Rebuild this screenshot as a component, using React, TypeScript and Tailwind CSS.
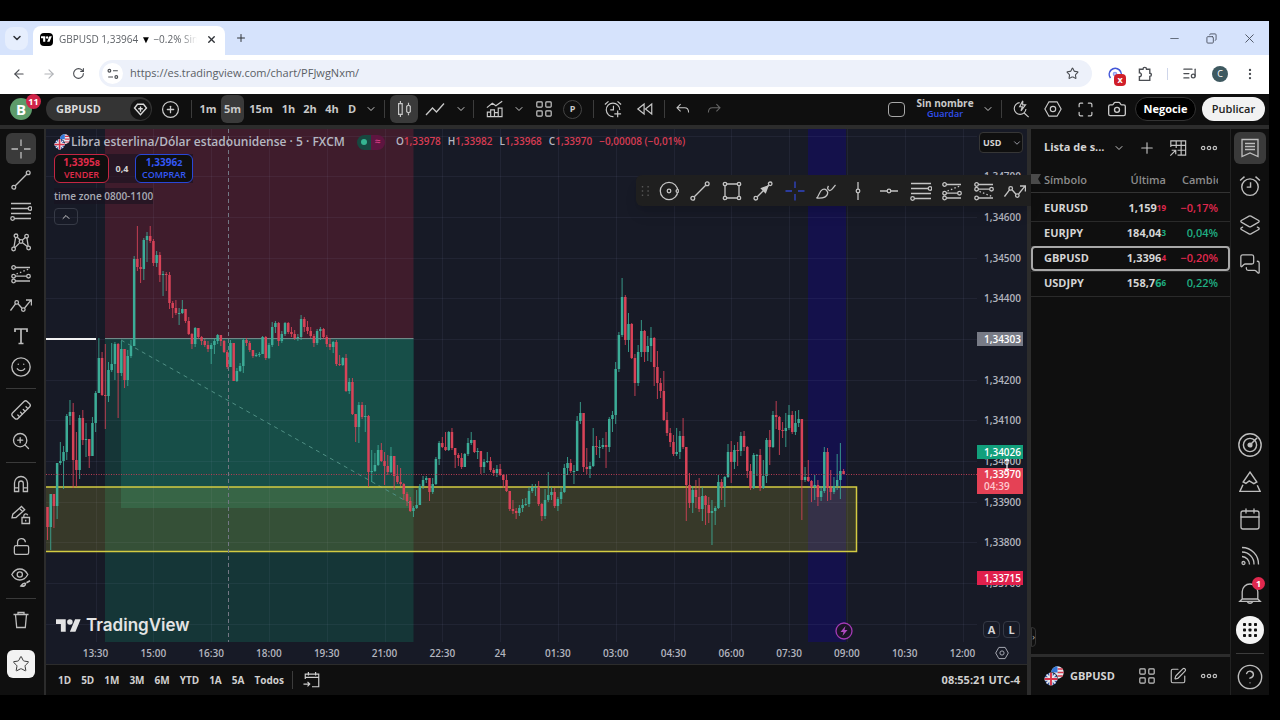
import type { ReactNode } from "react";
import {
  ArrowLeft,
  ArrowRight,
  Calendar,
  Camera,
  ChevronDown,
  ChevronUp,
  CircleHelp,
  CirclePlus,
  Copy,
  EllipsisVertical,
  Layers2,
  ListMusic,
  LockOpen,
  Maximize,
  MessagesSquare,
  Minus,
  Plus,
  RotateCw,
  Ruler,
  Smile,
  SquarePen,
  Star,
  X,
  ZoomIn,
} from "lucide-react";

/* ---------- icons ---------- */

function Icon({ children, className = "w-5 h-5" }: { children: ReactNode; className?: string }) {
  return (
    <svg viewBox="0 0 20 20" className={className} fill="none" stroke="currentColor" strokeWidth="1.3" aria-hidden="true">
      {children}
    </svg>
  );
}

const CrossIcon = () => (
  <Icon>
    <path d="M10 0.5v6.5M10 13v6.5M0.5 10h6.5M13 10h6.5" />
  </Icon>
);

const TrendIcon = () => (
  <Icon>
    <path d="M4.3 15.7 15.7 4.3" />
    <circle cx="2.8" cy="17.2" r="1.9" />
    <circle cx="17.2" cy="2.8" r="1.9" />
  </Icon>
);

const FibIcon = () => (
  <Icon className="w-[22px] h-5">
    <path d="M0 2.500h20M0 7.500h17M0 12.500h20M3.500 17.500H20" />
    <circle cx="19" cy="7.500" r="1.800" />
    <circle cx="1.600" cy="17.500" r="1.800" />
  </Icon>
);

const PatternIcon = () => (
  <Icon>
    <path d="M4.6 5.6 3 15.2M6.3 5.2l3 3M11.4 8l3-2.6M15.9 5.9l1.3 8.4M8.4 11.1l-4.6 4.7M11.5 10.7l4.8 3.9" />
    <circle cx="5" cy="3.8" r="1.8" />
    <circle cx="15.6" cy="4.2" r="1.8" />
    <circle cx="10" cy="9.5" r="1.8" />
    <circle cx="2.6" cy="17" r="1.8" />
    <circle cx="17.6" cy="16" r="1.8" />
  </Icon>
);

const LongIcon = () => (
  <Icon>
    <path d="M4.4 3.5H19M4.4 12.2h11.4M4.4 17H19" />
    <path d="M5.5 10 19 4.5" strokeDasharray="1.5 2.2" />
    <circle cx="2.6" cy="3.5" r="1.8" />
    <circle cx="2.6" cy="12.2" r="1.8" />
    <circle cx="2.6" cy="17" r="1.8" />
    <circle cx="17.5" cy="12.2" r="1.8" />
  </Icon>
);

const ShortIcon = () => (
  <Icon>
    <path d="M4.4 3.5H19M4.4 8.2h11.4M4.4 17H19" />
    <path d="M5.5 10.5 18 15.5" strokeDasharray="1.5 2.2" />
    <circle cx="2.6" cy="3.5" r="1.8" />
    <circle cx="2.6" cy="8.2" r="1.8" />
    <circle cx="2.6" cy="17" r="1.8" />
    <circle cx="17.5" cy="8.2" r="1.8" />
  </Icon>
);

const ZigzagIcon = () => (
  <Icon className="w-[22px] h-5">
    <path d="M-0.5 15.5 4.5 8.8M7 8.8l4 4.5M13.6 13 20 5.2M15 5h5.4v5.4" />
    <circle cx="5.7" cy="7.4" r="1.8" />
    <circle cx="12.3" cy="14.6" r="1.8" />
  </Icon>
);

const TextIcon = () => (
  <Icon>
    <path d="M4 6V3h12v3M10 3v14.5M7.5 17.5h5" strokeWidth="1.7" />
  </Icon>
);

const MagnetIcon = () => (
  <Icon>
    <path d="M3.5 17.5V9a6.5 6.5 0 0 1 13 0v8.500h-4.200V9.300a2.300 2.300 0 0 0-4.600 0v8.200zM3.500 13.800h4.200M12.300 13.800h4.200" />
  </Icon>
);

const PencilLockIcon = () => (
  <Icon>
    <path d="M1 12.800 1.800 9.200 10.500 1.500l3.200 3.200L5 12.500zM8.500 3.400l3.200 3.300M11 12.500h7.500v6H11zM12.800 12.500v-1.700a2 2 0 0 1 3.900-.5M14.700 14.700v1.700" />
  </Icon>
);

const EyeBrushIcon = () => (
  <Icon>
    <path d="M.8 7.500C3 3.500 5.800 2 8.800 2s5.900 1.500 8 5.500c-2.100 4-5 5.500-8 5.500S3 11.500.8 7.500z" />
    <circle cx="8.800" cy="7.500" r="2.600" />
    <path d="M10 19c3 .5 4.500-.5 4.500-2.500-1.800-.8-3 .2-4.500 2.500zM15.500 15.800l3.500-2" strokeWidth="1.600" />
  </Icon>
);

const TrashIcon = () => (
  <Icon>
    <path d="M2.500 4.500h15M7 4.200V2.500h6v1.700M4.500 4.500l1.200 13h8.600l1.200-13" />
  </Icon>
);

const GridIcon = () => (
  <Icon className="w-[18px] h-[18px]">
    <rect x="2" y="2" width="6" height="6" rx="1" />
    <rect x="12" y="2" width="6" height="6" rx="1" />
    <rect x="2" y="12" width="6" height="6" rx="1" />
    <rect x="12" y="12" width="6" height="6" rx="1" />
  </Icon>
);

const AlarmIcon = ({ plus = false }: { plus?: boolean }) => (
  <Icon className={plus ? "w-[18px] h-[18px]" : "w-[22px] h-[22px]"}>
    <path d={plus ? "M17.500 11A7.500 7.500 0 1 0 10.500 18.400M11.500 15.500h7.500M15.200 11.800v7.500" : "M17.500 11a7.500 7.500 0 1 1-15 0 7.500 7.500 0 0 1 15 0z"} />
    <path d="M10.500 6.500V11H7M1 5l4-3.500M19 5l-4-3.500" />
  </Icon>
);

const IndicatorIcon = () => (
  <Icon className="w-[18px] h-[18px]">
    <path d="M1.500 18.500v-5h3.700v5zM5.200 18.500v-7.500h4.200v7.500M9.400 14h4.200v4.500M13.600 18.500V9h4.200v9.500zM1.500 18.500h16.300M1 8.500l6-4.800 4 2.800L18 1.500" />
  </Icon>
);

const HexIcon = ({ className = "w-[18px] h-[18px]" }: { className?: string }) => (
  <Icon className={className}>
    <path d="M5.500 2h9L19 10l-4.500 8h-9L1 10z" />
    <circle cx="10" cy="10" r="3" />
  </Icon>
);

const DotsIcon = () => (
  <Icon className="w-[18px] h-[18px]">
    <circle cx="3.500" cy="10" r="1.900" />
    <circle cx="10" cy="10" r="1.900" />
    <circle cx="16.500" cy="10" r="1.900" />
  </Icon>
);

function Flags({ className }: { className: string }) {
  return (
    <svg viewBox="0 0 20 20" className={className} aria-hidden="true">
      <circle cx="13.500" cy="6.500" r="6.200" fill="#e8e8f0" />
      <path d="M13.500 3h5.200M13.500 6.500h6.200M13.500 10h5.200" stroke="#d33a4c" strokeWidth="1.500" />
      <path d="M13.500.3a6.200 6.200 0 0 0-6.200 6.200h6.200z" fill="#3478d8" />
      <circle cx="7" cy="13" r="7" fill="#101010" />
      <circle cx="7" cy="13" r="6.300" fill="#3c5ba8" />
      <path d="M2.600 8.600l8.800 8.800M11.400 8.600l-8.800 8.800" stroke="#eee" strokeWidth="1.500" />
      <path d="M7 6.700v12.600M.7 13h12.600" stroke="#eee" strokeWidth="3.400" />
      <path d="M7 6.700v12.600M.7 13h12.600" stroke="#d8334a" strokeWidth="1.900" />
    </svg>
  );
}

/* ---------- browser chrome ---------- */

function BrowserBar() {
  return (
    <header className="font-['Open_Sans',sans-serif] text-[#2f3237]">
      <div className="flex h-[34px] items-center bg-[#d6e3fc] pl-[5px]">
        <button aria-label="Buscar pestañas" className="flex h-[23px] w-[23px] items-center justify-center rounded-lg bg-[#e6eefd]">
          <ChevronDown className="h-3 w-3" strokeWidth={3} />
        </button>
        <div className="ml-[5px] flex h-[29px] w-[192px] items-center self-end rounded-t-lg bg-white pl-[7px] pb-[3px]">
          <span className="flex h-[13px] w-[13px] items-center justify-center rounded-sm bg-black text-white">
            <svg viewBox="0 0 36 26" className="w-[11px]" fill="currentColor" aria-hidden="true">
              <path d="M14 22H7V11H0V4h14v18zM28 22h-8l7.500-18h8L28 22z" />
              <circle cx="20" cy="8" r="4" />
            </svg>
          </span>
          <span className="ml-1.5 w-[138px] overflow-hidden text-[10px] whitespace-nowrap text-[#5f6368] [mask-image:linear-gradient(to_right,black_88%,transparent)]">
            GBPUSD 1,33964 <span className="text-black">▼</span> −0.2% Sin nombre
          </span>
          <button aria-label="Cerrar pestaña" className="ml-1.5 flex h-4 w-4 items-center justify-center">
            <X className="h-[11px] w-[11px]" strokeWidth={3} />
          </button>
        </div>
        <button aria-label="Nueva pestaña" className="ml-2 flex h-4 w-4 items-center justify-center">
          <Plus className="h-3 w-3" />
        </button>
        <div className="ml-auto flex items-center gap-6 pr-3 text-[#4b5260]">
          <button aria-label="Minimizar"><Minus className="h-[13px] w-[13px]" strokeWidth={1.5} /></button>
          <button aria-label="Restaurar"><Copy className="h-[11px] w-[13px] -scale-x-100" strokeWidth={2} /></button>
          <button aria-label="Cerrar"><X className="h-[15px] w-[15px]" strokeWidth={1.5} /></button>
        </div>
      </div>
      <div className="flex h-[39px] items-center bg-white px-3 pb-0.5 text-[#4a4d52]">
        <div className="flex items-center gap-4">
          <button aria-label="Atrás"><ArrowLeft className="h-[14px] w-[14px]" /></button>
          <button aria-label="Adelante"><ArrowRight className="h-[14px] w-[14px] text-[#b2b4b8]" /></button>
          <button aria-label="Recargar"><RotateCw className="h-[13px] w-[13px]" /></button>
        </div>
        <div className="ml-[14px] flex h-[27px] flex-1 items-center rounded-full bg-[#edf1fa] pr-[13px] pl-[3px]">
          <span className="flex h-[21px] w-[21px] items-center justify-center rounded-full bg-white">
            <Icon className="h-3 w-3">
              <circle cx="4" cy="4.500" r="2.300" strokeWidth="1.900" />
              <circle cx="15.500" cy="15" r="2.300" strokeWidth="1.900" />
              <path d="M10 4.500h8M2 15h8" strokeWidth="1.900" />
            </Icon>
          </span>
          <input
            aria-label="Dirección"
            className="ml-[7px] flex-1 bg-transparent text-[11px] text-[#5a5e65] outline-none"
            defaultValue="https://es.tradingview.com/chart/PFJwgNxm/"
          />
          <button aria-label="Añadir a favoritos"><Star className="h-[13px] w-[13px]" /></button>
        </div>
        <button aria-label="Extensión" className="relative ml-[15px] h-4 w-4">
          <svg viewBox="0 0 16 16" className="h-4 w-4" fill="none" stroke="#4357d8" strokeWidth="1.600" aria-hidden="true">
            <path d="M3.500 12A6 6 0 1 1 13 12" />
            <circle cx="8" cy="8" r="1.500" stroke="#8f9df0" />
          </svg>
          <span className="absolute top-2 left-[7px] flex h-3 w-3 items-center justify-center rounded-sm bg-[#d01f2a] text-[9px] font-bold text-white">x</span>
        </button>
        <button aria-label="Extensiones" className="ml-3.5">
          <Icon className="h-4 w-4">
            <path d="M3 4h4.500a2.200 2.200 0 0 1 4.400 0H16v5a2 2 0 0 1 0 4v5H3v-4.500a2.500 2.500 0 0 0 0-5z" strokeWidth="1.700" />
          </Icon>
        </button>
        <span className="ml-[14px] h-3 w-px bg-[#cfd6ea]" />
        <button aria-label="Controles multimedia" className="ml-[14px]"><ListMusic className="h-[15px] w-[15px]" /></button>
        <button aria-label="Perfil" className="ml-[15px] flex h-4 w-4 items-center justify-center rounded-full bg-[#3e5960] text-[9px] text-white">C</button>
        <button aria-label="Menú" className="ml-[15px]"><EllipsisVertical className="h-[14px] w-[14px]" /></button>
      </div>
    </header>
  );
}

/* ---------- top toolbar ---------- */

const intervals = [
  { label: "1m", width: "w-[26px]" },
  { label: "5m", width: "w-[23px]" },
  { label: "15m", width: "w-[34px]" },
  { label: "1h", width: "w-[21px]" },
  { label: "2h", width: "w-[22px]" },
  { label: "4h", width: "w-[22px]" },
  { label: "D", width: "w-[18px]" },
];

function Sep() {
  return <span className="mx-[3px] h-[18px] w-px shrink-0 bg-[#3c3c3c]" />;
}

function ToolButton({ label, className = "w-8", children }: { label: string; className?: string; children: ReactNode }) {
  return (
    <button aria-label={label} className={`flex h-7 shrink-0 items-center justify-center ${className}`}>
      {children}
    </button>
  );
}

function TopToolbar() {
  return (
    <div className="flex h-[35px] items-center border-b-4 border-[#2c2c2c] pb-px pl-[10px] text-[#c9c9c9]">
      <button aria-label="Cuenta" className="relative flex h-[22px] w-[22px] shrink-0 items-center justify-center rounded-full bg-[#5d9b6a] text-[15px] font-bold text-white">
        B
        <span className="absolute -top-1 left-4 flex h-[15px] w-[15px] items-center justify-center rounded-full bg-[#d02449] text-[9px] font-bold">11</span>
      </button>
      <button className="ml-3.5 flex h-6 w-[106px] shrink-0 items-center justify-between rounded-full bg-[#343434] pr-px pl-2.5 text-[11px] font-bold text-[#dcdcdc]">
        GBPUSD
        <span className="flex h-[21px] w-[21px] items-center justify-center rounded-full bg-[#141414]">
          <Icon className="h-[15px] w-[15px]">
            <path d="M6 3h8l4 5-8 9-8-9z" strokeWidth="1.800" />
            <path d="M10 6v7M7 9h6" strokeWidth="1.800" />
          </Icon>
        </span>
      </button>
      <ToolButton label="Comparar" className="w-9"><CirclePlus className="h-[19px] w-[19px]" strokeWidth={1.6} /></ToolButton>
      <Sep />
      {intervals.map((it) => (
        <button
          key={it.label}
          className={`h-7 shrink-0 rounded-md text-[11px] font-bold ${it.width} ${it.label === "5m" ? "bg-[#3a3a3a]" : ""}`}
        >
          {it.label}
        </button>
      ))}
      <ToolButton label="Más intervalos" className="w-5"><ChevronDown className="h-3 w-3" /></ToolButton>
      <Sep />
      <ToolButton label="Velas" className="ml-0.5 w-7 rounded-md bg-[#3a3a3a]">
        <Icon className="h-[18px] w-[18px]">
          <path d="M4 4h4v12H4zM6 1v3M6 16v3M13 7l2-1.500L17 7v6l-2 1.500L13 13zM15 3v2.500M15 14.500V17" />
        </Icon>
      </ToolButton>
      <ToolButton label="Línea" className="w-[34px]"><Icon><path d="M1 16 7.500 9l4 4L19 4.500" /></Icon></ToolButton>
      <ToolButton label="Más tipos" className="w-[18px]"><ChevronDown className="h-3 w-3" /></ToolButton>
      <Sep />
      <ToolButton label="Indicadores" className="w-9"><IndicatorIcon /></ToolButton>
      <ToolButton label="Más indicadores" className="w-3"><ChevronDown className="h-3 w-3" /></ToolButton>
      <ToolButton label="Diseño" className="w-[38px]"><GridIcon /></ToolButton>
      <button className="flex h-[19px] w-[19px] shrink-0 items-center justify-center rounded-full border border-[#444] text-[9px] font-bold">P</button>
      <span className="w-2" />
      <Sep />
      <ToolButton label="Alerta"><AlarmIcon plus /></ToolButton>
      <ToolButton label="Reproducción">
        <Icon className="h-[18px] w-[18px]"><path d="M9 4.500v11L2 10zM17.500 4.500v11l-7-5.500z" /></Icon>
      </ToolButton>
      <Sep />
      <ToolButton label="Deshacer" className="w-[30px]"><Icon className="h-4 w-4"><path d="M7 4 2.500 8.500 7 13M3 8.500h9c3 0 5 2 5 6" /></Icon></ToolButton>
      <ToolButton label="Rehacer" className="w-8 text-[#666]"><Icon className="h-4 w-4"><path d="M13 4l4.500 4.500L13 13M17 8.500H8c-3 0-5 2-5 6" /></Icon></ToolButton>

      <div className="ml-auto flex items-center pr-1">
        <ToolButton label="Disposición"><span className="h-[15px] w-[17px] rounded-sm border border-[#a8a8a8]" /></ToolButton>
        <button className="flex w-[66px] flex-col items-center pb-0.5 text-[10px] leading-[11px] font-bold">
          Sin nombre
          <span className="text-[9px] leading-[9px] font-semibold text-[#3150f0]">Guardar</span>
        </button>
        <ToolButton label="Más diseños" className="w-5"><ChevronDown className="h-3 w-3" /></ToolButton>
        <Sep />
        <ToolButton label="Búsqueda rápida">
          <Icon className="h-[18px] w-[18px]">
            <path d="M8.500 3a6.500 6.500 0 1 0 7 7M13.500 14.500l5 4.500M12 1 8.500 7.500h3L10 12l5-6.500h-3.200z" />
          </Icon>
        </ToolButton>
        <ToolButton label="Ajustes"><HexIcon /></ToolButton>
        <ToolButton label="Pantalla completa"><Maximize className="h-[17px] w-[17px]" strokeWidth={1.7} /></ToolButton>
        <ToolButton label="Captura"><Camera className="h-[20px] w-[20px]" strokeWidth={1.6} /></ToolButton>
        <button className="ml-0.5 h-6 w-[61px] rounded-full border border-[#333] bg-black text-[11px] font-bold text-white">Negocie</button>
        <button className="ml-[6px] h-6 w-[63px] rounded-full bg-[#f2f2f2] text-[11px] font-semibold text-[#222]">Publicar</button>
      </div>
    </div>
  );
}

/* ---------- left drawing tools ---------- */

function LeftTool({ label, active, children }: { label: string; active?: boolean; children: ReactNode }) {
  return (
    <button aria-label={label} className={`flex h-[31px] w-[30px] items-center justify-center ${active ? "rounded-md bg-[#3a3a3a]" : ""}`}>
      {children}
    </button>
  );
}

const Rule = () => <span className="my-[5px] h-px w-[30px] bg-[#3a3a3a]" />;

function LeftTools() {
  return (
    <aside className="flex w-[46px] shrink-0 flex-col items-center justify-between border-r-2 border-[#2c2c2c] pt-1 pr-[2px] pb-[17px] text-[#bdbdbd]">
      <LeftTool label="Cruz" active><CrossIcon /></LeftTool>
      <LeftTool label="Línea de tendencia"><TrendIcon /></LeftTool>
      <LeftTool label="Fibonacci"><FibIcon /></LeftTool>
      <LeftTool label="Patrones"><PatternIcon /></LeftTool>
      <LeftTool label="Previsión"><LongIcon /></LeftTool>
      <LeftTool label="Ondas"><ZigzagIcon /></LeftTool>
      <LeftTool label="Texto"><TextIcon /></LeftTool>
      <LeftTool label="Iconos"><Smile className="h-[22px] w-[22px]" strokeWidth={1.5} /></LeftTool>
      <Rule />
      <LeftTool label="Medir"><Ruler className="h-[22px] w-[22px] rotate-90" strokeWidth={1.5} /></LeftTool>
      <LeftTool label="Acercar"><ZoomIn className="h-5 w-5" strokeWidth={1.6} /></LeftTool>
      <Rule />
      <LeftTool label="Imán"><MagnetIcon /></LeftTool>
      <LeftTool label="Modo dibujo"><PencilLockIcon /></LeftTool>
      <LeftTool label="Bloquear"><LockOpen className="h-[19px] w-[19px]" strokeWidth={1.6} /></LeftTool>
      <LeftTool label="Ocultar"><EyeBrushIcon /></LeftTool>
      <Rule />
      <LeftTool label="Eliminar"><TrashIcon /></LeftTool>
      <button aria-label="Favoritos" className="mt-3.5 flex h-7 w-7 items-center justify-center rounded-md bg-[#f2f2f2] text-[#333]">
        <Star className="h-[18px] w-[18px]" strokeWidth={1.3} />
      </button>
    </aside>
  );
}

/* ---------- chart ---------- */

// The plot's own coordinate space
const VIEW = { x: 46, y: 129, w: 931, h: 513 };
const STEP = 3.21;
const FIRST_OPEN = 507;

// [close, high, low] for each five minute candle, already as plot heights
const candles: [number, number, number][] = [
  [527, 507, 540], [494, 494, 550], [506, 494, 528], [463, 463, 519], [461, 442, 465], [452, 446, 489], [416, 414, 460],
  [412, 400, 425], [460, 403, 488], [470, 432, 487], [418, 415, 479], [440, 410, 445], [439, 423, 457], [456, 439, 468],
  [423, 417, 456], [393, 391, 432], [358, 338, 393], [395, 352, 396], [396, 344, 429], [370, 362, 402], [364, 343, 372],
  [344, 342, 380], [373, 343, 418], [349, 341, 376], [380, 350, 388], [356, 350, 386], [346, 340, 358], [259, 256, 346],
  [267, 226, 271], [269, 258, 283], [240, 238, 280], [236, 232, 262], [241, 226, 243], [263, 239, 266], [255, 251, 267],
  [275, 252, 282], [274, 271, 296], [275, 272, 291], [303, 272, 309], [308, 301, 318], [313, 300, 315], [313, 308, 325],
  [309, 300, 314], [321, 309, 323], [334, 317, 335], [344, 333, 349], [328, 327, 347], [337, 328, 339], [341, 336, 345],
  [345, 339, 347], [349, 341, 352], [345, 343, 364], [341, 338, 354], [335, 334, 344], [341, 335, 346], [352, 340, 353],
  [367, 350, 369], [343, 340, 367], [381, 343, 381], [371, 368, 382], [366, 363, 372], [340, 338, 373], [343, 338, 346],
  [350, 341, 352], [356, 350, 358], [355, 353, 357], [354, 352, 357], [337, 336, 354], [358, 336, 360], [345, 343, 359],
  [327, 322, 347], [323, 321, 333], [341, 322, 346], [334, 331, 343], [323, 322, 336], [332, 322, 334], [334, 327, 337],
  [338, 330, 340], [337, 334, 341], [319, 315, 340], [327, 317, 332], [331, 321, 334], [336, 327, 338], [343, 334, 347],
  [331, 329, 345], [329, 327, 340], [337, 328, 339], [344, 335, 347], [347, 338, 350], [342, 341, 353], [364, 340, 366],
  [365, 355, 366], [358, 357, 366], [391, 354, 392], [382, 378, 394], [414, 378, 415], [427, 414, 442], [405, 402, 443],
  [417, 402, 419], [416, 405, 432], [472, 415, 487], [471, 450, 482], [465, 453, 472], [450, 445, 466], [461, 443, 462],
  [466, 452, 485], [472, 455, 475], [456, 447, 473], [476, 456, 490], [482, 465, 484], [484, 468, 486], [494, 483, 500],
  [501, 492, 506], [511, 497, 512], [508, 506, 517], [505, 490, 509], [486, 484, 503], [480, 476, 489], [478, 476, 483],
  [492, 478, 501], [484, 478, 494], [459, 457, 485], [443, 441, 465], [447, 437, 448], [450, 432, 451], [432, 431, 451],
  [448, 428, 450], [455, 448, 468], [458, 453, 466], [467, 453, 469], [454, 453, 467], [443, 438, 456], [440, 432, 445],
  [452, 440, 453], [451, 448, 459], [467, 451, 474], [462, 459, 473], [461, 452, 463], [470, 457, 472], [473, 468, 476],
  [469, 465, 477], [475, 464, 476], [480, 474, 488], [491, 475, 492], [509, 491, 511], [511, 500, 514], [513, 508, 519],
  [508, 505, 516], [505, 499, 512], [504, 498, 506], [491, 487, 507], [487, 484, 493], [487, 484, 496], [504, 481, 506],
  [516, 503, 521], [500, 489, 519], [495, 472, 502], [492, 487, 500], [506, 488, 508], [499, 497, 511], [492, 487, 504],
  [468, 464, 493], [463, 457, 475], [471, 459, 473], [471, 465, 484], [421, 416, 471], [413, 402, 424], [467, 413, 472],
  [469, 448, 474], [466, 462, 478], [446, 428, 467], [447, 436, 455], [447, 440, 458], [445, 438, 449], [447, 432, 468],
  [419, 417, 452], [415, 411, 432], [369, 362, 424], [335, 332, 372], [297, 278, 337], [340, 295, 345], [324, 313, 352],
  [358, 323, 359], [383, 354, 396], [352, 345, 386], [331, 320, 357], [352, 330, 362], [346, 336, 361], [338, 327, 362],
  [367, 337, 386], [383, 351, 399], [391, 378, 398], [420, 371, 421], [433, 412, 436], [442, 428, 447], [454, 435, 456],
  [452, 428, 456], [436, 431, 459], [447, 418, 449], [485, 447, 521], [503, 473, 508], [490, 486, 513], [497, 480, 508],
  [509, 478, 512], [496, 487, 521], [505, 495, 525], [513, 497, 523], [511, 500, 545], [508, 506, 525], [482, 475, 509],
  [487, 479, 500], [477, 476, 507], [452, 444, 478], [462, 441, 483], [450, 445, 469], [451, 442, 466], [436, 432, 456],
  [447, 431, 451], [471, 446, 478], [488, 464, 490], [455, 453, 489], [455, 454, 476], [488, 449, 491], [476, 460, 489],
  [440, 438, 483], [447, 430, 465], [415, 411, 448], [417, 401, 429], [430, 416, 455], [431, 422, 438], [428, 413, 447],
  [415, 405, 430], [432, 411, 434], [423, 411, 435], [419, 410, 427], [480, 419, 520], [477, 467, 482], [481, 460, 482],
  [487, 480, 502], [485, 475, 500], [497, 480, 506], [491, 486, 501], [452, 447, 493], [488, 448, 501], [492, 470, 500],
  [486, 477, 494], [480, 454, 490], [471, 443, 499], [474, 469, 474],
];

const times = ["13:30", "15:00", "16:30", "18:00", "19:30", "21:00", "22:30", "24", "01:30", "03:00", "04:30", "06:00", "07:30", "09:00", "10:30", "12:00"];
const timeX = (i: number) => 95.5 + i * 57.8;

const prices = [34700, 34600, 34500, 34400, 34200, 34100, 34000, 33900, 33800, 33700];
const priceY = (p: number) => 217 + (34600 - p) * 0.4068;
const pctY = (y: number) => `${((y - VIEW.y) / VIEW.h) * 100}%`;
const pctX = (x: number) => `${((x - VIEW.x) / VIEW.w) * 100}%`;

function Candles() {
  return (
    <g>
      {candles.map(([close, high, low], i) => {
        const open = i === 0 ? FIRST_OPEN : candles[i - 1][0];
        const color = close <= open ? "#3cac97" : "#d84358";
        const x = 47.5 + i * STEP;
        return (
          <g key={i} fill={color}>
            <rect x={x - 0.5} y={high} width="1" height={low - high} opacity="0.85" />
            <rect x={x - 1.25} y={Math.min(open, close)} width="2.5" height={Math.max(1, Math.abs(close - open))} />
          </g>
        );
      })}
    </g>
  );
}

function Plot() {
  return (
    <svg
      viewBox={`${VIEW.x} ${VIEW.y} ${VIEW.w} ${VIEW.h}`}
      preserveAspectRatio="none"
      className="absolute inset-0 h-full w-full"
      role="img"
      aria-label="Gráfico GBPUSD 5 minutos"
    >
      <rect x="105" y="129" width="308.500" height="210" fill="#3f1c2c" />
      <rect x="105" y="339" width="308.500" height="303" fill="#153637" />
      <rect x="121" y="339" width="292.500" height="169" fill="#174e48" />
      <rect x="808" y="129" width="38" height="513" fill="#14114b" />
      <g stroke="#9aa6c8" strokeOpacity="0.080">
        {times.map((t, i) => (
          <path key={t} d={`M${Math.round(timeX(i)) + 0.5} 129V642`} />
        ))}
        {Array.from({ length: 13 }, (_, i) => (
          <path key={i} d={`M46 ${Math.round(priceY(34800 - i * 100)) + 0.5}H977`} />
        ))}
      </g>
      <rect x="46" y="487" width="811" height="64.500" fill="#f4ee3b" fillOpacity="0.150" />
      <path d="M105 338.500H413.500" stroke="#6f8a88" />
      <path d="M121 340 413 505" stroke="#4f8f84" strokeDasharray="4 4" />
      <path d="M46 487H856.500V551.500H46" fill="none" stroke="#d3cb42" strokeWidth="1.500" />
      <Candles />
      <path d="M46 474.500H977" stroke="#b83c52" strokeDasharray="1 1.500" />
      <path d="M46 339H96" stroke="#f2f2f2" strokeWidth="2" />
      <path d="M228.500 129V642" stroke="#737784" strokeDasharray="4 3" />
      <circle cx="844" cy="631" r="8" fill="#1a1426" stroke="#a33ab5" strokeWidth="1.300" />
      <path d="M845.500 626 840.500 632H843.500L842.500 636 847.500 630H844.500z" fill="#b04ac0" />
    </svg>
  );
}

function Legend() {
  return (
    <div className="absolute top-[5px] left-2 flex flex-col items-start">
      <div className="flex h-4 items-center text-xs font-semibold whitespace-nowrap text-[#b5b7c1]">
        <Flags className="h-4 w-4" />
        <h1 className="ml-px">Libra esterlina/Dólar estadounidense · 5 · FXCM</h1>
        <span className="ml-3 flex h-[15px] w-7 overflow-hidden rounded-full">
          <span className="flex flex-1 items-center justify-center bg-[#174840]"><span className="h-1.5 w-1.5 rounded-full bg-[#35b591]" /></span>
          <span className="flex flex-1 items-center justify-center bg-[#5e1540] text-[10px] text-[#e0408a]">≈</span>
        </span>
        <p className="ml-[11px] flex gap-[7px] text-[10px] text-[#d63c53]">
          <span><span className="text-[#b5b7c1]">O</span>1,33978</span>
          <span><span className="text-[#b5b7c1]">H</span>1,33982</span>
          <span><span className="text-[#b5b7c1]">L</span>1,33968</span>
          <span><span className="text-[#b5b7c1]">C</span>1,33970</span>
          <span>−0,00008 (−0,01%)</span>
        </p>
      </div>
      <div className="mt-1 flex items-center bg-[#171320]/60 text-[10px] leading-[12px] font-semibold">
        <button className="h-[29px] w-[55px] rounded-md border border-[#c42643] bg-[#0f0f0f] text-[#e02b4b]">
          <span className="block font-bold">1,3395<span className="text-[9px]">8</span></span>
          <span className="block text-[9px]">VENDER</span>
        </button>
        <span className="w-[26px] text-center text-[9px] font-bold text-[#d0d0d0]">0,4</span>
        <button className="h-[29px] w-[58px] rounded-md border border-[#2947d8] bg-[#0f0f0f] text-[#3458f5]">
          <span className="block font-bold">1,3396<span className="text-[9px]">2</span></span>
          <span className="block text-[9px]">COMPRAR</span>
        </button>
      </div>
      <p className="mt-[5px] bg-[#171320]/60 text-[10px] leading-4 font-semibold text-[#a9abb5]">time zone 0800-1100</p>
      <button aria-label="Contraer" className="mt-1 flex h-[17px] w-6 items-center justify-center rounded-sm border border-[#363a46] text-[#c9c9c9]">
        <ChevronUp className="h-3 w-3" />
      </button>
    </div>
  );
}

const floating: [string, ReactNode][] = [
  ["Círculo", <Icon key="i"><circle cx="10" cy="10" r="8.700" /><circle cx="10" cy="10" r="1.800" /><circle cx="18.500" cy="10" r="1.400" fill="#1f1f1f" /></Icon>],
  ["Línea", <TrendIcon key="i" />],
  ["Rectángulo", <Icon key="i"><path d="M4.500 3h11M4.500 17h11M3 4.500v11M17 4.500v11" /><circle cx="3" cy="3" r="1.700" /><circle cx="17" cy="3" r="1.700" /><circle cx="3" cy="17" r="1.700" /><circle cx="17" cy="17" r="1.700" /></Icon>],
  ["Flecha", <Icon key="i"><path d="M4.300 15.700 15.700 4.300" /><path d="M15 5 8.500 7.500l4 4z" fill="currentColor" /><circle cx="2.800" cy="17.200" r="1.800" /><circle cx="17.200" cy="2.800" r="1.800" /></Icon>],
  ["Cruz", <span key="i" className="text-[#3145c8]"><CrossIcon /></span>],
  ["Pincel", <Icon key="i"><path d="M.5 17c2.500-1 2.500-7 6-8.500 3-1.200 6 1.500 5 4.500-1 3.500-5 4.500-11 4zM12.500 5c-1.500 2-1 3.500 1 4.500 2.500.5 3.500-3 6-5.500" /></Icon>],
  ["Línea vertical", <Icon key="i"><path d="M10 1v7.200M10 11.800V19" /><circle cx="10" cy="10" r="1.800" /></Icon>],
  ["Línea horizontal", <Icon key="i"><path d="M1 10h7.200M11.800 10H19" /><circle cx="10" cy="10" r="1.800" /></Icon>],
  ["Retroceso", <FibIcon key="i" />],
  ["Posición larga", <LongIcon key="i" />],
  ["Posición corta", <ShortIcon key="i" />],
  ["Ondas", <ZigzagIcon key="i" />],
];

function FloatingTools() {
  return (
    <div className="absolute top-[46px] -right-1 flex h-[31px] w-[395px] items-center rounded-l-md bg-[#1f1f1f] pl-[3px] text-[#c4c4c4] shadow-lg">
      <Icon className="h-3.5 w-3.5 shrink-0">
        <path d="M5 3v14M13 3v14" strokeDasharray="2 4" strokeWidth="2" stroke="#555" />
      </Icon>
      {floating.map(([label, icon]) => (
        <button key={label} aria-label={label} className="flex flex-1 items-center justify-center">
          {icon}
        </button>
      ))}
    </div>
  );
}

function PriceAxis() {
  return (
    <div className="relative w-[50px] shrink-0 text-[10px] font-semibold text-[#b3b5bf]">
      {prices.map((p) => (
        <span key={p} className="absolute left-[7px] -translate-y-1/2 leading-3" style={{ top: pctY(priceY(p)) }}>
          1,{p}
        </span>
      ))}
      <span className="absolute left-0 w-[46px] -translate-y-1/2 bg-[#787b86] pl-[7px] leading-[14px] text-white" style={{ top: pctY(339) }}>1,34303</span>
      <span className="absolute left-0 w-[46px] -translate-y-1/2 bg-[#12a07c] pl-[7px] leading-[14px] text-white" style={{ top: pctY(451.5) }}>1,34026</span>
      <span className="absolute left-0 w-[46px] -translate-y-1/2 bg-[#e54155] pl-[7px] leading-[12px] text-white" style={{ top: pctY(480.5) }}>
        1,33970
        <span className="block pb-0.5 text-[#ffc9d0]">04:39</span>
      </span>
      <span className="absolute left-0 w-[46px] -translate-y-1/2 bg-[#e0204c] pl-[7px] leading-[14px] text-white" style={{ top: pctY(577.5) }}>1,33715</span>
      <svg viewBox="0 0 6 14" className="absolute left-[27px] h-3.5 w-1.5 -translate-y-1/2" style={{ top: pctY(465) }} aria-hidden="true">
        <path d="M3 1v12M1 3l2-2 2 2M1 11l2 2 2-2" fill="none" stroke="#fff" strokeWidth="1.200" />
      </svg>
      <select
        aria-label="Moneda"
        className="absolute top-[3px] right-1 h-[21px] w-11 appearance-none rounded-sm border border-[#363636] bg-[#0f0f0f] pl-[3px] text-[9px] font-bold text-[#d5d5d5]"
      >
        <option>USD</option>
      </select>
      <ChevronDown className="pointer-events-none absolute top-[9px] right-[5px] h-2.5 w-2.5" />
      <div className="absolute right-[7px] bottom-1 flex gap-[3px] text-[#d5d5d5]">
        <button className="h-[17px] w-[17px] rounded-sm border border-[#363a46] text-[11px] leading-[14px] font-bold">A</button>
        <button className="h-[17px] w-[17px] rounded-sm border border-[#363a46] text-[11px] leading-[14px] font-bold">L</button>
      </div>
    </div>
  );
}

function Brand() {
  return (
    <div className="absolute bottom-[6px] left-2.5 flex items-center gap-[5px] text-[#e4e4e4]">
      <svg viewBox="0 4 36 18" className="h-[13px] w-[25px]" fill="currentColor" aria-hidden="true">
        <path d="M14 22H7V11H0V4h14v18zM28 22h-8l7.500-18h8L28 22z" />
        <circle cx="20" cy="8" r="4" />
      </svg>
      <span className="font-['Inter',sans-serif] text-[17px] leading-[22px] font-semibold">TradingView</span>
    </div>
  );
}

const ranges = ["1D", "5D", "1M", "3M", "6M", "YTD", "1A", "5A", "Todos"];

function ChartPane() {
  return (
    <main className="flex min-w-0 flex-1 flex-col border-r-4 border-[#2c2c2c] bg-[#171a26]">
      <div className="relative flex min-h-0 flex-1">
        <div className="relative min-w-0 flex-1">
          <Plot />
          <Legend />
          <Brand />
        </div>
        <PriceAxis />
        <FloatingTools />
      </div>
      <div className="flex h-[23px] border-b border-[#2c2c2c] text-[10px] font-semibold text-[#b3b5bf]">
        <div className="relative flex-1">
          {times.map((t, i) => (
            <span key={t} className="absolute top-[4px] -translate-x-1/2" style={{ left: pctX(timeX(i)) }}>
              {t}
            </span>
          ))}
        </div>
        <button aria-label="Ajustes del eje" className="flex w-[50px] items-center justify-center"><HexIcon className="h-[14px] w-[14px]" /></button>
      </div>
      <div className="flex h-[30px] items-center bg-[#0f0f0f] pr-[7px] pl-3 text-[11px] font-bold text-[#cfcfcf]">
        <div className="flex items-center gap-2.5 text-[10px]">
          {ranges.map((r) => (
            <button key={r}>{r}</button>
          ))}
        </div>
        <span className="ml-2 h-[18px] w-px bg-[#3c3c3c]" />
        <button aria-label="Ir a" className="ml-2.5">
          <Icon className="h-[18px] w-[18px]">
            <path d="M2.500 9V3.500h15v14H10M2.500 7h15M6 1v4M14 1v4M.5 14.500h7M5 12l2.500 2.500L5 17" />
          </Icon>
        </button>
        <span className="ml-auto">08:55:21 UTC-4</span>
      </div>
    </main>
  );
}

/* ---------- watch list ---------- */

const rows = [
  { symbol: "EURUSD", last: "1,159", tail: "19", change: "−0,17%", up: false },
  { symbol: "EURJPY", last: "184,04", tail: "3", change: "0,04%", up: true },
  { symbol: "GBPUSD", last: "1,3396", tail: "4", change: "−0,20%", up: false },
  { symbol: "USDJPY", last: "158,7", mid: "6", tail: "6", change: "0,22%", up: true },
];

function WatchList() {
  return (
    <section className="relative flex w-[200px] shrink-0 flex-col border-r border-[#222] text-[#d4d4d4]">
      <div className="flex h-[37px] items-center pl-[13px]">
        <button className="flex items-center text-[11px] font-bold whitespace-nowrap">
          Lista de s...
        </button>
        <div className="ml-auto flex items-center gap-[13px] pr-3 text-[#c4c4c4]">
          <button aria-label="Elegir lista"><ChevronDown className="h-3 w-3" /></button>
          <button aria-label="Añadir símbolo"><Plus className="h-[18px] w-[18px]" strokeWidth={1.5} /></button>
          <button aria-label="Tabla">
            <Icon className="h-[18px] w-[18px]">
              <path d="M2 9V2h16.500v16H9.500M2 7h16.500M9.500 12.500h9M8 2v8M13.500 2v16M1.500 18.500l5.500-5.500M3 12.500h4.500V17" />
            </Icon>
          </button>
          <button aria-label="Más"><DotsIcon /></button>
        </div>
      </div>
      <svg viewBox="0 0 10 10" className="absolute top-[45px] left-0 h-2.5 w-2.5" fill="#4a4a4a" aria-hidden="true">
        <path d="M0 0h10L7 5l3 5H0z" />
      </svg>
      <table className="w-full table-fixed border-collapse text-[11px]">
        <thead>
          <tr className="h-[26px] border-b border-[#333] text-[11px] text-[#8c8c8c]">
            <th className="w-[70px] pt-0.5 pl-[13px] text-left font-semibold">Símbolo</th>
            <th className="pt-0.5 text-right font-semibold">Última</th>
            <th className="w-16 pt-0.5 pr-3 font-semibold">
              <span className="ml-auto block w-9 overflow-hidden text-left">Cambio</span>
            </th>
          </tr>
        </thead>
        <tbody>
          <tr className="h-1"><td colSpan={3} /></tr>
          {rows.map((r) => (
            <tr
              key={r.symbol}
              className={`border-b border-[#2a2a2a] font-bold ${r.symbol === "GBPUSD" ? "rounded-sm outline-2 -outline-offset-2 outline-[#a8a8a8]" : ""}`}
            >
              <td className="h-[25px] pl-[13px]">{r.symbol}</td>
              <td className="text-right whitespace-nowrap">
                {r.last}
                <span className={r.up ? "text-[#1fae82]" : "text-[#e0284e]"}>
                  {r.mid}
                  <span className="align-[1px] text-[8px]">{r.tail}</span>
                </span>
              </td>
              <td className={`pr-3 text-right font-semibold ${r.up ? "text-[#1fae82]" : "text-[#e0284e]"}`}>{r.change}</td>
            </tr>
          ))}
        </tbody>
      </table>
      <button aria-label="Ocultar panel" className="absolute bottom-12 left-0 h-5 w-[5px] rounded-r-sm border border-[#333] text-[9px] leading-[16px] text-[#bdbdbd]">
        ›
      </button>
      <div className="mt-auto flex h-[41px] items-center border-t-[3px] border-[#2c2c2c] pr-3 pl-[13px]">
        <Flags className="h-5 w-5" />
        <span className="ml-1.5 text-[11px] font-bold">GBPUSD</span>
        <div className="ml-auto flex gap-[13px] text-[#c4c4c4]">
          <button aria-label="Vista"><GridIcon /></button>
          <button aria-label="Nota"><SquarePen className="h-[18px] w-[18px]" strokeWidth={1.5} /></button>
          <button aria-label="Más opciones"><DotsIcon /></button>
        </div>
      </div>
    </section>
  );
}

function RightRail() {
  const item = "flex h-[37px] w-full items-center justify-center";
  const topItem = "flex h-[39px] w-full items-center justify-center";
  return (
    <nav className="flex w-[38px] shrink-0 flex-col items-center text-[#bdbdbd]">
      <button aria-label="Lista de seguimiento" className="mt-[3px] flex h-8 w-8 items-center justify-center rounded-md bg-[#3a3a3a]">
        <Icon>
          <path d="M2 1.500h16v17l-8-3.500-8 3.500zM5 5.500h10M5 8.500h10M5 11.500h10" />
        </Icon>
      </button>
      <button aria-label="Alertas" className={`mt-0.5 ${topItem}`}><AlarmIcon /></button>
      <button aria-label="Árbol de objetos" className={topItem}><Layers2 className="h-[22px] w-[22px]" strokeWidth={1.4} /></button>
      <button aria-label="Chats" className={topItem}><MessagesSquare className="h-[22px] w-[22px]" strokeWidth={1.4} /></button>
      <div className="mt-auto" />
      <button aria-label="Filtros" className={item}>
        <Icon className="h-6 w-6"><circle cx="10" cy="10" r="9.300" strokeWidth="1.200" /><circle cx="10" cy="10" r="5.500" strokeWidth="1.200" /><circle cx="10" cy="10" r="1.500" fill="currentColor" /><path d="M10 10l6-6" /></Icon>
      </button>
      <button aria-label="Pine" className={item}>
        <Icon className="h-[22px] w-[22px]"><path d="M10 1 3.800 10l2.500 1.200 3-2.200 4.200 2.500 2.700-1.500zM3.600 12.500.8 18.500h18.400l-2.600-5.500" /></Icon>
      </button>
      <button aria-label="Calendario" className={item}><Calendar className="h-6 w-6" strokeWidth={1.3} /></button>
      <button aria-label="Noticias" className={item}>
        <Icon><path d="M2 1.500A16.500 16.500 0 0 1 18.500 18.500M2 6A12 12 0 0 1 14 18.500M2 10.500A8 8 0 0 1 9.500 18.500" /><circle cx="3.500" cy="17" r="1.500" /></Icon>
      </button>
      <button aria-label="Notificaciones" className={`relative ${item}`}>
        <Icon className="h-6 w-6"><path d="M3.500 15V9a6.500 6.500 0 0 1 13 0v6M3.500 15 1.500 17h17l-2-2zM7.800 17.200c.8 1.800 3.600 1.800 4.400 0" strokeWidth="1.100" /></Icon>
        <span className="absolute top-[3px] right-1 flex h-[13px] w-[13px] items-center justify-center rounded-full bg-[#e0284e] text-[9px] font-bold text-white">1</span>
      </button>
      <button aria-label="Productos" className="my-[5px] flex h-7 w-7 items-center justify-center rounded-full bg-[#f4f4f4]">
        <svg viewBox="0 0 16 16" className="h-4 w-4" fill="#111" aria-hidden="true">
          {[1, 6.5, 12].map((y) => [1, 6.5, 12].map((x) => <rect key={`${x}-${y}`} x={x} y={y} width="3" height="3" rx="0.800" />))}
        </svg>
      </button>
      <span className="mt-1 h-px w-7 bg-[#3c3c3c]" />
      <button aria-label="Ayuda" className={`mt-1 ${item}`}><CircleHelp className="h-7 w-7" strokeWidth={1.2} /></button>
    </nav>
  );
}

export default function App() {
  return (
    <div className="flex h-screen min-h-[640px] flex-col bg-black pt-[21px] pr-[11px] pb-[25px]">
      <BrowserBar />
      <div className="flex min-h-0 flex-1 flex-col bg-[#0f0f0f] font-['Open_Sans',sans-serif]">
        <TopToolbar />
        <div className="flex min-h-0 flex-1">
          <LeftTools />
          <ChartPane />
          <WatchList />
          <RightRail />
        </div>
      </div>
    </div>
  );
}
